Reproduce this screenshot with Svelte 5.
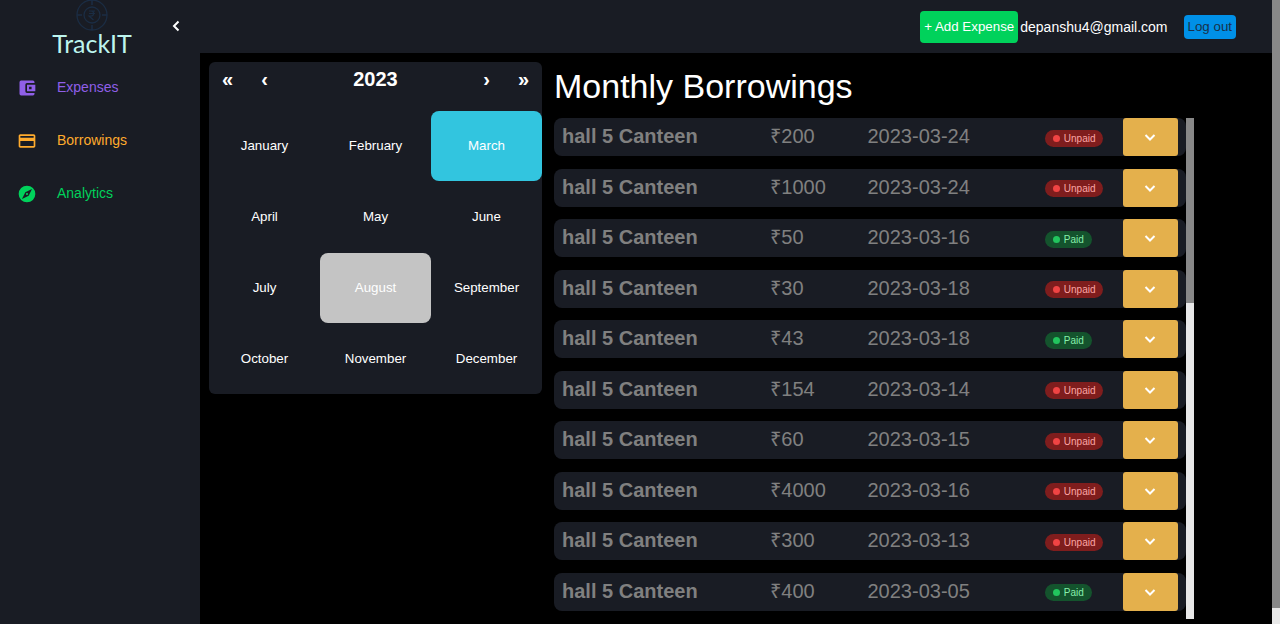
<script>
  const months = ['January', 'February', 'March', 'April', 'May', 'June', 'July', 'August', 'September', 'October', 'November', 'December'];
  let selected = $state('March');
  const hovered = 'August';

  const borrowings = [
    { amount: 200, date: '2023-03-24', paid: false },
    { amount: 1000, date: '2023-03-24', paid: false },
    { amount: 50, date: '2023-03-16', paid: true },
    { amount: 30, date: '2023-03-18', paid: false },
    { amount: 43, date: '2023-03-18', paid: true },
    { amount: 154, date: '2023-03-14', paid: false },
    { amount: 60, date: '2023-03-15', paid: false },
    { amount: 4000, date: '2023-03-16', paid: false },
    { amount: 300, date: '2023-03-13', paid: false },
    { amount: 400, date: '2023-03-05', paid: true }
  ];
</script>

<div class="app">
  <aside class="sidebar">
    <header class="side-head">
      <div class="brand">
        <svg class="emblem" viewBox="0 0 32 32" width="32" height="32" fill="none" stroke="currentColor" aria-hidden="true">
          <circle cx="16" cy="15" r="15" stroke-width="1.300" />
          <circle cx="16" cy="15" r="8" stroke-width="1.300" />
          <path d="M16 0v5M16 25v5M1 15h5M26 15h5" stroke-width="1.500" />
          <path d="M13 11h6M13 13.500h6M13 11h2c3.500 0 3.500 5 0 5h-2l4.500 4" stroke-width="1.200" />
        </svg>
        <span class="name">TrackIT</span>
      </div>
      <button class="collapse" aria-label="Collapse sidebar">
        <svg viewBox="0 0 12 12" width="12" height="12" fill="none" stroke="currentColor" stroke-width="2" aria-hidden="true"><path d="M8.500 1.500 4 6l4.500 4.500" /></svg>
      </button>
    </header>
    <nav>
      <a class="expenses" href="#expenses">
        <svg viewBox="0 0 24 24" width="20" height="20" fill="currentColor" aria-hidden="true"><path fill-rule="evenodd" d="M21 6V5a2 2 0 0 0-2-2H5a2 2 0 0 0-2 2v14a2 2 0 0 0 2 2h14a2 2 0 0 0 2-2v-1h-9a2 2 0 0 1-2-2V8a2 2 0 0 1 2-2zM12 8v8h10V8zM14.500 10.500h3v3h-3z" /></svg>
        <span>Expenses</span>
      </a>
      <a class="borrow" href="#borrowings">
        <svg viewBox="0 0 24 24" width="20" height="20" fill="currentColor" aria-hidden="true"><path d="M20 4H4c-1.110 0-1.990.89-1.990 2L2 18c0 1.110.89 2 2 2h16c1.110 0 2-.89 2-2V6c0-1.110-.89-2-2-2zm0 14H4v-6h16v6zm0-10H4V6h16v2z" /></svg>
        <span>Borrowings</span>
      </a>
      <a class="analytics" href="#analytics">
        <svg viewBox="0 0 24 24" width="20" height="20" fill="currentColor" aria-hidden="true"><path fill-rule="evenodd" d="M12 2a10 10 0 1 0 0 20 10 10 0 0 0 0-20zM18 6l-4 8-8 4 4-8zM12 10.700a1.300 1.300 0 1 0 0 2.600 1.300 1.300 0 0 0 0-2.600z" /></svg>
        <span>Analytics</span>
      </a>
    </nav>
  </aside>

  <div class="body">
    <header class="topbar">
      <button class="add">+ Add Expense</button>
      <span class="email">depanshu4@gmail.com</span>
      <button class="logout">Log out</button>
    </header>

    <main>
      <section class="calendar" aria-label="Month picker">
        <div class="cal-nav">
          <button aria-label="Back several years">«</button>
          <button aria-label="Previous year">‹</button>
          <button class="year">2023</button>
          <button aria-label="Next year">›</button>
          <button aria-label="Forward several years">»</button>
        </div>
        <div class="months">
          {#each months as month}
            <button class:selected={month === selected} class:hovered={month === hovered && month !== selected} onclick={() => (selected = month)}>{month}</button>
          {/each}
        </div>
      </section>

      <section class="monthly">
        <h1>Monthly Borrowings</h1>
        <div class="scroller">
          <ul>
            {#each borrowings as item}
              <li>
                <strong>hall 5 Canteen</strong>
                <span>₹{item.amount}</span>
                <span>{item.date}</span>
                <span class="status"><span class="badge" class:paid={item.paid}><i></i>{item.paid ? 'Paid' : 'Unpaid'}</span></span>
                <button aria-label="Show details">
                  <svg viewBox="0 0 12 12" width="12" height="12" fill="none" stroke="currentColor" stroke-width="2" aria-hidden="true"><path d="M1.500 4 6 8.500 10.500 4" /></svg>
                </button>
              </li>
            {/each}
          </ul>
          <div class="track"><div class="thumb list-thumb"></div></div>
        </div>
      </section>
    </main>
  </div>

  <div class="track"><div class="thumb page-thumb"></div></div>
</div>

<style>
  :global(body) {
    margin: 0;
    background: #000;
  }
  .app {
    display: grid;
    grid-template-columns: 200px minmax(0, 1fr) 8px;
    min-height: 100vh;
    font-family: "Liberation Sans", Arial, sans-serif;
    font-size: 14px;
    color: #fff;
  }
  button {
    font-family: inherit;
    color: inherit;
    border: 0;
    padding: 0;
    background: none;
    cursor: pointer;
  }
  .sidebar,
  .topbar,
  .calendar,
  li {
    background: #191c24;
  }
  .side-head {
    display: grid;
    grid-template-columns: 1fr 48px;
    padding-left: 32px;
    height: 60px;
  }
  .brand {
    display: flex;
    flex-direction: column;
    align-items: center;
  }
  .emblem {
    color: #1b2d44;
  }
  .name {
    font-family: Lato, "Liberation Sans", sans-serif;
    font-size: 25px;
    line-height: 22px;
    color: #bdf5ee;
  }
  .collapse {
    height: 52px;
  }
  .collapse svg,
  li svg {
    display: block;
    margin: auto;
  }
  nav {
    display: flex;
    flex-direction: column;
    gap: 25px;
    padding: 14px 17px;
  }
  nav a {
    display: flex;
    align-items: center;
    gap: 20px;
    height: 28px;
    text-decoration: none;
  }
  nav span {
    padding-bottom: 2px;
  }
  .expenses { color: #8f5fe8; }
  .borrow { color: #ffab2d; }
  .analytics { color: #00d25b; }

  .body {
    display: flex;
    flex-direction: column;
  }
  .topbar {
    display: flex;
    align-items: center;
    justify-content: flex-end;
    height: 53px;
    padding-right: 36px;
  }
  .add {
    height: 32px;
    padding: 0 4px;
    border-radius: 4px;
    background: #00d25b;
  }
  .email {
    margin: 0 16px 0 2px;
  }
  .logout {
    height: 24px;
    padding: 0 4px;
    border-radius: 4px;
    background: #0090e7;
    color: #19304a;
  }
  main {
    flex: 1;
    display: grid;
    grid-template-columns: 333fr 640fr;
    gap: 12px;
    padding: 9px 78px 5px 9px;
  }
  .calendar {
    align-self: start;
    border-radius: 6px;
  }
  .cal-nav {
    display: grid;
    grid-template-columns: 37px 37px 1fr 37px 37px;
    height: 35px;
    margin-bottom: 14px;
  }
  .cal-nav button {
    font-size: 20px;
    font-weight: bold;
  }
  .months {
    display: grid;
    grid-template-columns: repeat(3, 1fr);
    grid-auto-rows: 70px;
    row-gap: 1px;
  }
  .months button {
    padding-bottom: 2px;
    border-radius: 8px;
  }
  .months .selected { background: #32c5df; }
  .months .hovered { background: #c4c4c4; }

  .monthly {
    display: flex;
    flex-direction: column;
  }
  h1 {
    margin: 0 0 8px;
    font-size: 34px;
    font-weight: normal;
    line-height: 48px;
  }
  .scroller {
    flex: 1;
    display: grid;
    grid-template-columns: 1fr 8px;
  }
  ul {
    display: flex;
    flex-direction: column;
    justify-content: space-between;
    gap: 8px;
    margin: 0 0 8px;
    padding: 0;
    list-style: none;
  }
  li {
    display: grid;
    grid-template-columns: 208fr 97fr 177fr 78fr 55fr;
    height: 38px;
    padding: 0 8px;
    border-radius: 8px;
    font-size: 20px;
    line-height: 36px;
    color: #808080;
  }
  li button {
    height: 38px;
    border-radius: 3px;
    background: #e4b04c;
    color: #fff;
  }
  .status {
    display: flex;
    align-items: center;
    padding-top: 2px;
  }
  .badge {
    display: flex;
    align-items: center;
    gap: 4px;
    padding: 0 8px;
    border-radius: 9px;
    background: #7f1d1d;
    color: #fca5a5;
    font-size: 10px;
    line-height: 17px;
  }
  .badge i {
    width: 7px;
    height: 7px;
    border-radius: 50%;
    background: #f04444;
  }
  .badge.paid {
    background: #14532d;
    color: #86efac;
  }
  .badge.paid i {
    background: #22c55e;
  }
  .track {
    background: #e8e8e8;
  }
  .thumb {
    background: #888;
  }
  .list-thumb { height: 37%; }
  .page-thumb { height: 97.5%; }
</style>
